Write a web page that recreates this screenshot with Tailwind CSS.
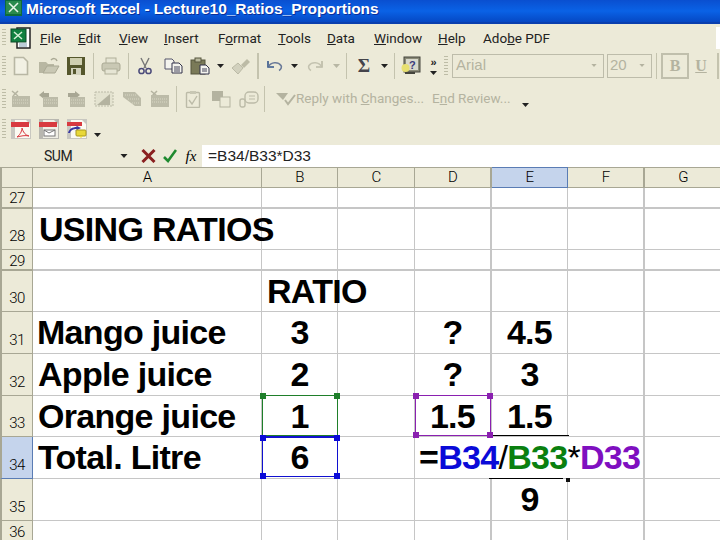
<!DOCTYPE html>
<html>
<head>
<meta charset="utf-8">
<script src="https://cdn.jsdelivr.net/npm/@tailwindcss/browser@4"></script>
</head>
<body class="bg-white">
<div class="relative w-[720px] h-[540px] overflow-hidden bg-[#ecead8] [font-family:'Liberation_Sans',sans-serif] text-black">

  <!-- Title bar -->
  <div class="h-[24px] flex items-start bg-gradient-to-b from-[#0a4fd0] via-[#0a62e6] to-[#0648c4] border-b-2 border-[#0a3fae]">
    <div class="w-[26px] pl-[5px] shrink-0">
      <svg width="17" height="16" viewBox="0 0 17 16"><rect width="17" height="16" fill="#0f6b3a"/><rect x="1" y="1" width="15" height="13" fill="#2a8a4e"/><path d="M4 3l9 9M13 3l-9 9" stroke="#e8f5e8" stroke-width="1.5"/></svg>
    </div>
    <div class="text-[15.5px] leading-[18px] font-bold text-white whitespace-nowrap [text-shadow:1px_1px_0_#0a2f9a] tracking-[-0.03px]">Microsoft Excel - Lecture10_Ratios_Proportions</div>
  </div>

  <!-- Menu bar -->
  <div class="relative h-[24px] pt-[4px] flex items-center [font-family:Roboto,sans-serif] text-[13.5px] text-[#222] whitespace-nowrap">
    <div class="ml-[2px] h-[18px] w-[4px] bg-[repeating-linear-gradient(to_bottom,#c0bfa8_0,#c0bfa8_1px,transparent_1px,transparent_3px)]"></div>
    <div class="w-[30px] ml-[4px] shrink-0">
      <svg width="22" height="22" viewBox="0 0 22 22"><rect x="7" y="1" width="13" height="20" fill="#fff" stroke="#222" stroke-width="1.5"/><rect x="1" y="2" width="15" height="13" fill="#108040" stroke="#0a4a28"/><path d="M4 5l8 7M12 5l-8 7" stroke="#d8f0d8" stroke-width="1.5"/><path d="M9 17h8M9 19h8" stroke="#7a9ab0"/></svg>
    </div>
    <div class="w-[38px] shrink-0"><u>F</u>ile</div>
    <div class="w-[41px] shrink-0"><u>E</u>dit</div>
    <div class="w-[45px] shrink-0"><u>V</u>iew</div>
    <div class="w-[54px] shrink-0"><u>I</u>nsert</div>
    <div class="w-[60px] shrink-0">F<u>o</u>rmat</div>
    <div class="w-[49px] shrink-0"><u>T</u>ools</div>
    <div class="w-[47px] shrink-0"><u>D</u>ata</div>
    <div class="w-[64px] shrink-0"><u>W</u>indow</div>
    <div class="w-[45px] shrink-0"><u>H</u>elp</div>
    <div class="shrink-0">Ado<u>b</u>e PDF</div>
    <div class="absolute right-0 top-[3px] w-[4px] h-[22px] bg-white"></div>
  </div>

  <!-- Standard toolbar -->
  <div class="h-[35px] flex items-center text-[#b4b3a0] whitespace-nowrap">
    <div class="w-[7px] shrink-0 pl-[2px]"><div class="w-[4px] h-[20px] bg-[repeating-linear-gradient(to_bottom,#bdbca6_0,#bdbca6_1px,transparent_1px,transparent_3px)]"></div></div>
    <div class="w-[28px] flex justify-center"><svg width="16" height="20" viewBox="0 0 16 20"><path d="M1.500 1.500h9l4 4v13h-13z" fill="#f2f1e4" stroke="#b8b7a4" stroke-width="1.6"/></svg></div>
    <div class="w-[28px] flex justify-center"><svg width="22" height="18" viewBox="0 0 22 18"><path d="M1 5h7l2 2h6v9H1z" fill="#b8b7a2"/><path d="M5 16l4-7h12l-4 7z" fill="#c9c8b4" stroke="#aaa994"/><path d="M13 3c2-2 5-2 6 1" fill="none" stroke="#aaa994" stroke-width="1.5"/></svg></div>
    <div class="w-[26px] flex justify-center"><svg width="18" height="18" viewBox="0 0 18 18"><rect width="18" height="18" fill="#55572c"/><rect x="3" y="1" width="12" height="7" fill="#cfcfb0"/><rect x="4" y="11" width="10" height="7" fill="#d2d2bc"/><rect x="6" y="12" width="3" height="5" fill="#55572c"/></svg></div>
    <div class="w-[8px] flex justify-center"><div class="w-[1px] h-[26px] bg-[#c4c3ae]"></div></div>
    <div class="w-[28px] flex justify-center"><svg width="20" height="18" viewBox="0 0 20 18"><rect x="5" y="1" width="10" height="6" fill="#e6e5d4" stroke="#b0af9a"/><rect x="1" y="6" width="18" height="8" rx="2" fill="#c9c8b4" stroke="#aaa994"/><rect x="4" y="12" width="12" height="5" fill="#e6e5d4" stroke="#b0af9a"/></svg></div>
    <div class="w-[6px] flex justify-center"><div class="w-[1px] h-[26px] bg-[#c4c3ae]"></div></div>
    <div class="w-[28px] flex justify-center"><svg width="14" height="18" viewBox="0 0 14 18"><path d="M3 1l5 10M11 1L6 11" stroke="#777" stroke-width="1.4"/><circle cx="3.500" cy="14" r="2.6" fill="none" stroke="#4a4a7a" stroke-width="1.5"/><circle cx="10.500" cy="14" r="2.6" fill="none" stroke="#4a4a7a" stroke-width="1.5"/></svg></div>
    <div class="w-[28px] flex justify-center"><svg width="19" height="16" viewBox="0 0 19 16"><path d="M1 1h7l2 2v8H1z" fill="#f4f4ee" stroke="#55556a"/><path d="M8 5h7l3 3v7H8z" fill="#f4f4ee" stroke="#33334a"/><path d="M10 9h6M10 11h6M10 13h6" stroke="#44445a"/></svg></div>
    <div class="w-[26px] flex justify-center"><svg width="20" height="18" viewBox="0 0 20 18"><rect x="1" y="3" width="14" height="14" fill="#7a7a58" stroke="#55553c"/><rect x="5" y="1" width="6" height="4" fill="#b8b89c" stroke="#55553c"/><path d="M10 8h6l3 3v6h-9z" fill="#f4f4ee" stroke="#33334a"/><path d="M12 12h5M12 14h5" stroke="#44445a"/></svg></div>
    <div class="w-[14px] flex justify-center"><svg width="7" height="4" viewBox="0 0 7 4"><path d="M0 0h7L3.500 4z" fill="#222"/></svg></div>
    <div class="w-[28px] flex justify-center"><svg width="20" height="18" viewBox="0 0 20 18"><path d="M1 11l6-5 5 5-5 6z" fill="#d2d1be" stroke="#bbbaa6"/><path d="M10 8l6-6 3 3-6 6z" fill="#bcbba6"/></svg></div>
    <div class="w-[6px] flex justify-center"><div class="w-[2px] h-[26px] bg-[#c4c3ae]"></div></div>
    <div class="w-[28px] flex justify-center"><svg width="16" height="12" viewBox="0 0 16 12"><path d="M1 1v6h6" fill="none" stroke="#33558a" stroke-width="1.6"/><path d="M1.500 6.500C4 2 11 1.500 14 5.500c1 1.500 0 4-2 5" fill="none" stroke="#6a7a98" stroke-width="1.6"/></svg></div>
    <div class="w-[10px] flex justify-center"><svg width="7" height="4" viewBox="0 0 7 4"><path d="M0 0h7L3.500 4z" fill="#222"/></svg></div>
    <div class="w-[32px] flex justify-center"><svg width="16" height="12" viewBox="0 0 16 12"><path d="M15 1v6H9" fill="none" stroke="#bbbaa6" stroke-width="1.6"/><path d="M14.500 6.500C12 2 5 1.500 2 5.500c-1 1.500 0 4 2 5" fill="none" stroke="#c4c3b0" stroke-width="1.6"/></svg></div>
    <div class="w-[10px] flex justify-center"><svg width="7" height="4" viewBox="0 0 7 4"><path d="M0 0h7L3.500 4z" fill="#b8b7a4"/></svg></div>
    <div class="w-[10px] flex justify-center"><div class="w-[1px] h-[26px] bg-[#c4c3ae]"></div></div>
    <div class="w-[26px] text-center [font-family:'Liberation_Serif',serif] text-[19px] leading-none font-bold text-[#44444a]">Σ</div>
    <div class="w-[14px] flex justify-center"><svg width="7" height="4" viewBox="0 0 7 4"><path d="M0 0h7L3.500 4z" fill="#222"/></svg></div>
    <div class="w-[6px] flex justify-center"><div class="w-[1px] h-[26px] bg-[#c4c3ae]"></div></div>
    <div class="w-[28px] flex justify-center"><svg width="20" height="20" viewBox="0 0 20 20"><rect x="3" y="1" width="16" height="15" fill="#8a8a78" stroke="#44443c"/><rect x="5" y="3" width="12" height="11" fill="#d8d8cc"/><text x="8" y="13" font-family="Liberation Sans" font-size="11" font-weight="700" fill="#3a3a7a">?</text><circle cx="4.500" cy="12" r="4" fill="#e8e070"/><path d="M4 17h10" stroke="#44443c" stroke-width="2"/></svg></div>
    <div class="w-[16px] flex flex-col items-center gap-[4px] pt-[2px]"><div class="text-[11px] leading-[9px] font-bold tracking-[-1px] text-[#222]">»</div><svg width="7" height="4" viewBox="0 0 7 4"><path d="M0 0h7L3.500 4z" fill="#222"/></svg></div>
    <div class="w-[10px] flex justify-center"><div class="w-[4px] h-[20px] bg-[repeating-linear-gradient(to_bottom,#bdbca6_0,#bdbca6_1px,transparent_1px,transparent_3px)]"></div></div>
    <div class="ml-[1px] w-[152px] h-[24px] border border-[#bdbcaa] flex items-center justify-between pl-[3px] pr-[6px] text-[15px] text-[#b4b3a0]">Arial<svg width="6" height="3" viewBox="0 0 7 4"><path d="M0 0h7L3.500 4z" fill="#b4b3a0"/></svg></div>
    <div class="ml-[3px] w-[45px] h-[24px] border border-[#bdbcaa] flex items-center justify-between pl-[2px] pr-[6px] text-[15px] text-[#b4b3a0]">20<svg width="6" height="3" viewBox="0 0 7 4"><path d="M0 0h7L3.500 4z" fill="#b4b3a0"/></svg></div>
    <div class="w-[9px] flex justify-center"><div class="w-[1px] h-[26px] bg-[#c4c3ae]"></div></div>
    <div class="w-[28px] h-[26px] border-2 border-[#c0bfac] flex items-center justify-center [font-family:'Liberation_Serif',serif] text-[16px] font-bold text-[#b4b3a0]">B</div>
    <div class="w-[24px] text-center [font-family:'Liberation_Serif',serif] text-[16px] font-bold underline text-[#b4b3a0]">U</div>
    <div class="ml-[4px] w-[2px] h-[26px] bg-[#c4c3ae]"></div>
  </div>

  <!-- Reviewing toolbar -->
  <div class="h-[31px] flex items-center whitespace-nowrap">
    <div class="w-[7px] shrink-0 pl-[2px]"><div class="w-[4px] h-[20px] bg-[repeating-linear-gradient(to_bottom,#bdbca6_0,#bdbca6_1px,transparent_1px,transparent_3px)]"></div></div>
    <div class="w-[28px] flex justify-center"><svg width="20" height="18" viewBox="0 0 20 18"><path d="M1 1l6 5M7 1L2 6" stroke="#b4b3a0" stroke-width="1.500"/><rect x="1" y="6" width="18" height="11" fill="#bcbba8"/><path d="M2 10h16M2 13h16" stroke="#d8d7c4" stroke-dasharray="1 1"/></svg></div>
    <div class="w-[28px] flex justify-center"><svg width="20" height="18" viewBox="0 0 20 18"><path d="M0 5l5-4v2h5v4H5v2z" fill="#a8a794"/><rect x="4" y="7" width="15" height="10" fill="#bcbba8"/><path d="M5 10h13M5 13h13" stroke="#d8d7c4" stroke-dasharray="1 1"/></svg></div>
    <div class="w-[27px] flex justify-center"><svg width="20" height="18" viewBox="0 0 20 18"><path d="M13 5L8 1v2H1v4h7v2z" fill="#a8a794"/><rect x="3" y="7" width="15" height="10" fill="#bcbba8"/><path d="M4 10h13M4 13h13" stroke="#d8d7c4" stroke-dasharray="1 1"/></svg></div>
    <div class="w-[28px] flex justify-center"><svg width="20" height="16" viewBox="0 0 20 16"><rect x="1" y="1" width="18" height="14" fill="#e4e3d0" stroke="#bcbba8" stroke-dasharray="2 1"/><path d="M3 14L16 3v11z" fill="#b4b3a0"/></svg></div>
    <div class="w-[28px] flex justify-center"><svg width="20" height="16" viewBox="0 0 20 16"><path d="M1 1h12l6 6v8h-6L1 6z" fill="#bcbba8"/><path d="M3 4h11M6 8h11M10 12h8" stroke="#d8d7c4" stroke-dasharray="1 1"/></svg></div>
    <div class="w-[27px] flex justify-center"><svg width="20" height="18" viewBox="0 0 20 18"><path d="M1 1l6 5M7 1L2 6" stroke="#b4b3a0" stroke-width="1.500"/><rect x="1" y="5" width="18" height="12" fill="#bcbba8"/><path d="M2 9h16M2 12h16" stroke="#d8d7c4" stroke-dasharray="1 1"/></svg></div>
    <div class="w-[6px] flex justify-center"><div class="w-[1px] h-[26px] bg-[#c4c3ae]"></div></div>
    <div class="w-[28px] flex justify-center"><svg width="16" height="18" viewBox="0 0 16 18"><rect x="1.500" y="2.500" width="13" height="15" rx="1" fill="none" stroke="#bcbba8" stroke-width="1.400"/><rect x="5" y="1" width="6" height="3" fill="#c8c7b4"/><path d="M4 10l3 4 5-8" fill="none" stroke="#bcbba8" stroke-width="1.400"/></svg></div>
    <div class="w-[28px] flex justify-center"><svg width="20" height="18" viewBox="0 0 20 18"><rect x="1" y="1" width="11" height="10" fill="#b4b3a0"/><rect x="9" y="7" width="10" height="10" fill="#ecead8" stroke="#b4b3a0"/></svg></div>
    <div class="w-[28px] flex justify-center"><svg width="20" height="18" viewBox="0 0 20 18"><rect x="6" y="2" width="13" height="11" rx="4" fill="none" stroke="#bcbba8" stroke-width="1.400"/><path d="M10 6h6M10 9h6" stroke="#bcbba8"/><rect x="1" y="9" width="5" height="8" rx="2" fill="none" stroke="#bcbba8" stroke-width="1.400"/></svg></div>
    <div class="w-[3px] flex justify-center"><div class="w-[1px] h-[26px] bg-[#c4c3ae]"></div></div>
    <div class="ml-[10px] w-[20px] flex"><svg width="20" height="14" viewBox="0 0 20 14"><path d="M0 1h12l-5 7z" fill="#b4b3a0"/><path d="M9 8l3 4 7-9" fill="none" stroke="#b4b3a0" stroke-width="2"/></svg></div>
    <div class="[font-family:Roboto,sans-serif] text-[13.5px] text-[#b4b3a0] w-[136px]">Reply with <u>C</u>hanges...</div>
    <div class="[font-family:Roboto,sans-serif] text-[13.5px] text-[#b4b3a0] w-[90px]">E<u>n</u>d Review...</div>
    <svg class="mt-[12px]" width="7" height="4" viewBox="0 0 7 4"><path d="M0 0h7L3.500 4z" fill="#222"/></svg>
  </div>

  <!-- PDF toolbar -->
  <div class="h-[31px] pb-[2px] flex items-center">
    <div class="w-[7px] shrink-0 pl-[2px]"><div class="w-[4px] h-[20px] bg-[repeating-linear-gradient(to_bottom,#bdbca6_0,#bdbca6_1px,transparent_1px,transparent_3px)]"></div></div>
    <div class="w-[28px] flex justify-center"><svg width="20" height="20" viewBox="0 0 20 20"><rect width="20" height="20" fill="#c8c7c0"/><path d="M4 1h11l4 4v14H4z" fill="#fbfaf2"/><rect x="0" y="3" width="18" height="5" fill="#d83a40"/><path d="M6 18c4-3 5-7 5-9 1 4 3 7 7 8-4-1-8 0-12 1z" fill="none" stroke="#d83a40"/></svg></div>
    <div class="w-[28px] flex justify-center"><svg width="20" height="20" viewBox="0 0 20 20"><rect width="20" height="20" fill="#b8b7b0"/><path d="M4 1h11l4 4v14H4z" fill="#f0efe6"/><rect x="0" y="3" width="18" height="5" fill="#d83a40"/><rect x="5" y="11" width="11" height="6" fill="#fff" stroke="#777"/><path d="M5 11l5 3 6-3" fill="none" stroke="#777"/></svg></div>
    <div class="w-[27px] flex justify-center"><svg width="20" height="20" viewBox="0 0 20 20"><rect width="20" height="20" fill="#c8c7c0"/><path d="M4 1h11l4 4v14H4z" fill="#fbfaf2"/><rect x="0" y="3" width="15" height="4" fill="#d83a40"/><path d="M1 14c1-4 4-6 9-6l-2-2 6 3-6 3 2-2c-4 0-6 1-7 4z" fill="#3838a0"/><rect x="9" y="11" width="10" height="6" rx="1" fill="#e8d838" stroke="#a89820"/><path d="M12 17h4l-2 2z" fill="#e8d838"/></svg></div>
    <div class="w-[14px] flex justify-center mt-[12px]"><svg width="7" height="4" viewBox="0 0 7 4"><path d="M0 0h7L3.500 4z" fill="#222"/></svg></div>
  </div>

  <!-- Formula bar -->
  <div class="h-[22px] flex items-center whitespace-nowrap">
    <div class="w-[116px] pl-[44px] text-[14px] [font-family:Roboto,sans-serif] text-[#222] tracking-[-0.5px] shrink-0">SUM</div>
    <div class="w-[20px] pl-[4px] flex"><svg width="8" height="4" viewBox="0 0 7 4"><path d="M0 0h7L3.500 4z" fill="#222"/></svg></div>
    <div class="w-[24px] flex justify-center"><svg width="15" height="14" viewBox="0 0 15 14"><path d="M1.500 1l12 12M13.500 1l-12 12" stroke="#8a2020" stroke-width="3"/></svg></div>
    <div class="w-[20px] flex justify-center"><svg width="14" height="14" viewBox="0 0 14 14"><path d="M1 8l4 4 8-11" fill="none" stroke="#1f8a30" stroke-width="2.600"/></svg></div>
    <div class="w-[22px] text-center [font-family:'Liberation_Serif',serif] italic text-[15px]">fx</div>
    <div class="flex-1 h-full bg-white pl-[6px] text-[15.5px] leading-[21px] text-[#222]">=B34/B33*D33</div>
  </div>

  <!-- Sheet -->
  <div class="relative">
    <div class="grid grid-cols-[33px_229px_76px_77px_77px_76px_77px_76px] grid-rows-[21px_21px_41px_21px_41px_42px_42px_41px_42px_42px_19px] text-[34px] tracking-[-0.7px] leading-[38px] font-bold whitespace-nowrap bg-white">

      <div class="bg-[#ecead8] border-l-2 border-t border-r border-b border-[#a8a794]"></div>
      <div class="bg-[#ecead8] border-t border-r border-b border-[#a8a794] flex items-center justify-center [font-family:Roboto,sans-serif] font-light text-[15px] leading-none">A</div>
      <div class="bg-[#ecead8] border-t border-r border-b border-[#a8a794] flex items-center justify-center [font-family:Roboto,sans-serif] font-light text-[15px] leading-none">B</div>
      <div class="bg-[#ecead8] border-t border-r border-b border-[#a8a794] flex items-center justify-center [font-family:Roboto,sans-serif] font-light text-[15px] leading-none">C</div>
      <div class="bg-[#ecead8] border-t border-r-2 border-b border-[#a8a794] flex items-center justify-center [font-family:Roboto,sans-serif] font-light text-[15px] leading-none">D</div>
      <div class="bg-[#c5d4ec] border-t border-r border-b border-[#5a7cb4] flex items-center justify-center [font-family:Roboto,sans-serif] font-light text-[15px] leading-none">E</div>
      <div class="bg-[#ecead8] border-t border-r-2 border-b border-[#a8a794] flex items-center justify-center [font-family:Roboto,sans-serif] font-light text-[15px] leading-none">F</div>
      <div class="bg-[#ecead8] border-t border-b border-[#a8a794] flex items-center justify-center [font-family:Roboto,sans-serif] font-light text-[15px] leading-none">G</div>

      <!-- 27 -->
      <div class="bg-[#ecead8] border-l-2 border-r border-b-2 border-[#a8a794] flex items-end justify-center pb-[1px] [font-family:Roboto,sans-serif] font-light text-[15px] leading-[16px] tracking-[-0.5px]">27</div>
      <div class="border-r border-b-2 border-[#c6c6c6]"></div><div class="border-r border-b-2 border-[#c6c6c6]"></div><div class="border-r border-b-2 border-[#c6c6c6]"></div><div class="border-r-2 border-b-2 border-[#c6c6c6]"></div><div class="border-r border-b-2 border-[#c6c6c6]"></div><div class="border-r-2 border-b-2 border-[#c6c6c6]"></div><div class="border-b-2 border-[#c6c6c6]"></div>

      <!-- 28 -->
      <div class="bg-[#ecead8] border-l-2 border-r border-b border-[#a8a794] flex items-end justify-center pb-[5px] [font-family:Roboto,sans-serif] font-light text-[15px] leading-[16px] tracking-[-0.5px]">28</div>
      <div class="border-r border-b border-[#c6c6c6] flex items-end pl-[6px] pb-[1px]">USING RATIOS</div>
      <div class="border-r border-b border-[#c6c6c6]"></div><div class="border-r border-b border-[#c6c6c6]"></div><div class="border-r-2 border-b border-[#c6c6c6]"></div><div class="border-r border-b border-[#c6c6c6]"></div><div class="border-r-2 border-b border-[#c6c6c6]"></div><div class="border-b border-[#c6c6c6]"></div>

      <!-- 29 -->
      <div class="bg-[#ecead8] border-l-2 border-r border-b-2 border-[#a8a794] flex items-end justify-center [font-family:Roboto,sans-serif] font-light text-[15px] leading-[16px] tracking-[-0.5px]">29</div>
      <div class="border-r border-b-2 border-[#c6c6c6]"></div><div class="border-r border-b-2 border-[#c6c6c6]"></div><div class="border-r border-b-2 border-[#c6c6c6]"></div><div class="border-r-2 border-b-2 border-[#c6c6c6]"></div><div class="border-r border-b-2 border-[#c6c6c6]"></div><div class="border-r-2 border-b-2 border-[#c6c6c6]"></div><div class="border-b-2 border-[#c6c6c6]"></div>

      <!-- 30 -->
      <div class="bg-[#ecead8] border-l-2 border-r border-b border-[#a8a794] flex items-end justify-center pb-[5px] [font-family:Roboto,sans-serif] font-light text-[15px] leading-[16px] tracking-[-0.5px]">30</div>
      <div class="border-r border-b border-[#c6c6c6]"></div>
      <div class="border-r border-b border-[#c6c6c6] flex items-end pl-[5px] pb-[1px]">RATIO</div>
      <div class="border-r border-b border-[#c6c6c6]"></div><div class="border-r-2 border-b border-[#c6c6c6]"></div><div class="border-r border-b border-[#c6c6c6]"></div><div class="border-r-2 border-b border-[#c6c6c6]"></div><div class="border-b border-[#c6c6c6]"></div>

      <!-- 31 -->
      <div class="bg-[#ecead8] border-l-2 border-r border-b border-[#a8a794] flex items-end justify-center pb-[5px] [font-family:Roboto,sans-serif] font-light text-[15px] leading-[16px] tracking-[-0.5px]">31</div>
      <div class="border-r border-b border-[#c6c6c6] flex items-end pl-[4px] pb-[2px]">Mango juice</div>
      <div class="border-r border-b border-[#c6c6c6] flex items-end justify-center pb-[2px]">3</div>
      <div class="border-r border-b border-[#c6c6c6]"></div>
      <div class="border-r-2 border-b border-[#c6c6c6] flex items-end justify-center pb-[2px]">?</div>
      <div class="border-r border-b border-[#c6c6c6] flex items-end justify-center pb-[2px]">4.5</div>
      <div class="border-r-2 border-b border-[#c6c6c6]"></div><div class="border-b border-[#c6c6c6]"></div>

      <!-- 32 -->
      <div class="bg-[#ecead8] border-l-2 border-r border-b border-[#a8a794] flex items-end justify-center pb-[5px] [font-family:Roboto,sans-serif] font-light text-[15px] leading-[16px] tracking-[-0.5px]">32</div>
      <div class="border-r border-b border-[#c6c6c6] flex items-end pl-[5px] pb-[2px]">Apple juice</div>
      <div class="border-r border-b border-[#c6c6c6] flex items-end justify-center pb-[2px]">2</div>
      <div class="border-r border-b border-[#c6c6c6]"></div>
      <div class="border-r-2 border-b border-[#c6c6c6] flex items-end justify-center pb-[2px]">?</div>
      <div class="border-r border-b border-[#c6c6c6] flex items-end justify-center pb-[2px]">3</div>
      <div class="border-r-2 border-b border-[#c6c6c6]"></div><div class="border-b border-[#c6c6c6]"></div>

      <!-- 33 -->
      <div class="bg-[#ecead8] border-l-2 border-r border-b border-[#a8a794] flex items-end justify-center pb-[5px] [font-family:Roboto,sans-serif] font-light text-[15px] leading-[16px] tracking-[-0.5px]">33</div>
      <div class="border-r border-b border-[#c6c6c6] flex items-end pl-[5px] pb-[1px]">Orange juice</div>
      <div class="border-r border-b border-[#c6c6c6] flex items-end justify-center pb-[1px]">1</div>
      <div class="border-r border-b border-[#c6c6c6]"></div>
      <div class="border-r-2 border-b border-[#c6c6c6] flex items-end justify-center pb-[1px]">1.5</div>
      <div class="border-r border-b border-[#c6c6c6] flex items-end justify-center pb-[1px]">1.5</div>
      <div class="border-r-2 border-b border-[#c6c6c6]"></div><div class="border-b border-[#c6c6c6]"></div>

      <!-- 34 -->
      <div class="bg-[#c5d4ec] border-l-2 border-l-[#a8a794] border-r border-b border-[#5a7cb4] flex items-end justify-center pb-[5px] [font-family:Roboto,sans-serif] font-light text-[15px] leading-[16px] tracking-[-0.5px]">34</div>
      <div class="border-r border-b border-[#c6c6c6] flex items-end pl-[5px] pb-[2px]">Total. Litre</div>
      <div class="border-r border-b border-[#c6c6c6] flex items-end justify-center pb-[2px]">6</div>
      <div class="border-r border-b border-[#c6c6c6]"></div>
      <div class="border-b border-[#c6c6c6] flex items-end pl-[4px] pb-[2px]"><span>=</span><span class="text-[#0a0ad8]">B34</span><span class="font-normal">/</span><span class="text-[#0a800f]">B33</span><span class="font-normal">*</span><span class="text-[#7f0fc0]">D33</span></div>
      <div class="border-b border-[#c6c6c6]"></div>
      <div class="border-r-2 border-b border-[#c6c6c6]"></div><div class="border-b border-[#c6c6c6]"></div>

      <!-- 35 -->
      <div class="bg-[#ecead8] border-l-2 border-r border-b border-[#a8a794] flex items-end justify-center pb-[5px] [font-family:Roboto,sans-serif] font-light text-[15px] leading-[16px] tracking-[-0.5px]">35</div>
      <div class="border-r border-b border-[#c6c6c6]"></div><div class="border-r border-b border-[#c6c6c6]"></div><div class="border-r border-b border-[#c6c6c6]"></div><div class="border-r-2 border-b border-[#c6c6c6]"></div>
      <div class="border-r border-b border-[#c6c6c6] flex items-end justify-center pb-[2px]">9</div>
      <div class="border-r-2 border-b border-[#c6c6c6]"></div><div class="border-b border-[#c6c6c6]"></div>

      <!-- 36 -->
      <div class="bg-[#ecead8] border-l-2 border-r border-[#a8a794] flex items-end justify-center [font-family:Roboto,sans-serif] font-light text-[15px] leading-[16px] tracking-[-0.5px]">36</div>
      <div class="border-r border-[#c6c6c6]"></div><div class="border-r border-[#c6c6c6]"></div><div class="border-r border-[#c6c6c6]"></div><div class="border-r-2 border-[#c6c6c6]"></div><div class="border-r border-[#c6c6c6]"></div><div class="border-r-2 border-[#c6c6c6]"></div><div></div>
    </div>

    <!-- Range selections and hand-drawn lines over the cells -->
    <div class="absolute left-[262px] top-[228px] w-[76px] h-[41px] border border-[#1f7f2a]">
      <div class="absolute -left-[3px] -top-[3px] w-[6px] h-[6px] bg-[#1f7f2a]"></div>
      <div class="absolute -right-[3px] -top-[3px] w-[6px] h-[6px] bg-[#1f7f2a]"></div>
    </div>
    <div class="absolute left-[262px] top-[269px] w-[76px] h-[41px] border border-[#1010d0] border-t-2">
      <div class="absolute -left-[3px] -top-[3px] w-[6px] h-[6px] bg-[#0a0ad8]"></div>
      <div class="absolute -right-[3px] -top-[3px] w-[6px] h-[6px] bg-[#0a0ad8]"></div>
      <div class="absolute -left-[3px] -bottom-[3px] w-[6px] h-[6px] bg-[#0a0ad8]"></div>
      <div class="absolute -right-[3px] -bottom-[3px] w-[6px] h-[6px] bg-[#0a0ad8]"></div>
    </div>
    <div class="absolute left-[415px] top-[228px] w-[76px] h-[41px] border border-[#8a20b0]">
      <div class="absolute -left-[3px] -top-[3px] w-[6px] h-[6px] bg-[#8a20b0]"></div>
      <div class="absolute -right-[3px] -top-[3px] w-[6px] h-[6px] bg-[#8a20b0]"></div>
      <div class="absolute -left-[3px] -bottom-[3px] w-[6px] h-[6px] bg-[#8a20b0]"></div>
      <div class="absolute -right-[3px] -bottom-[3px] w-[6px] h-[6px] bg-[#8a20b0]"></div>
    </div>
    <div class="absolute left-[493px] top-[268px] w-[76px] h-[1px] bg-black"></div>
    <div class="absolute left-[489px] top-[311px] w-[74px] h-[1px] bg-black"></div>
    <div class="absolute left-[566px] top-[311px] w-[4px] h-[4px] bg-[#111]"></div>
  </div>
</div>
</body>
</html>
